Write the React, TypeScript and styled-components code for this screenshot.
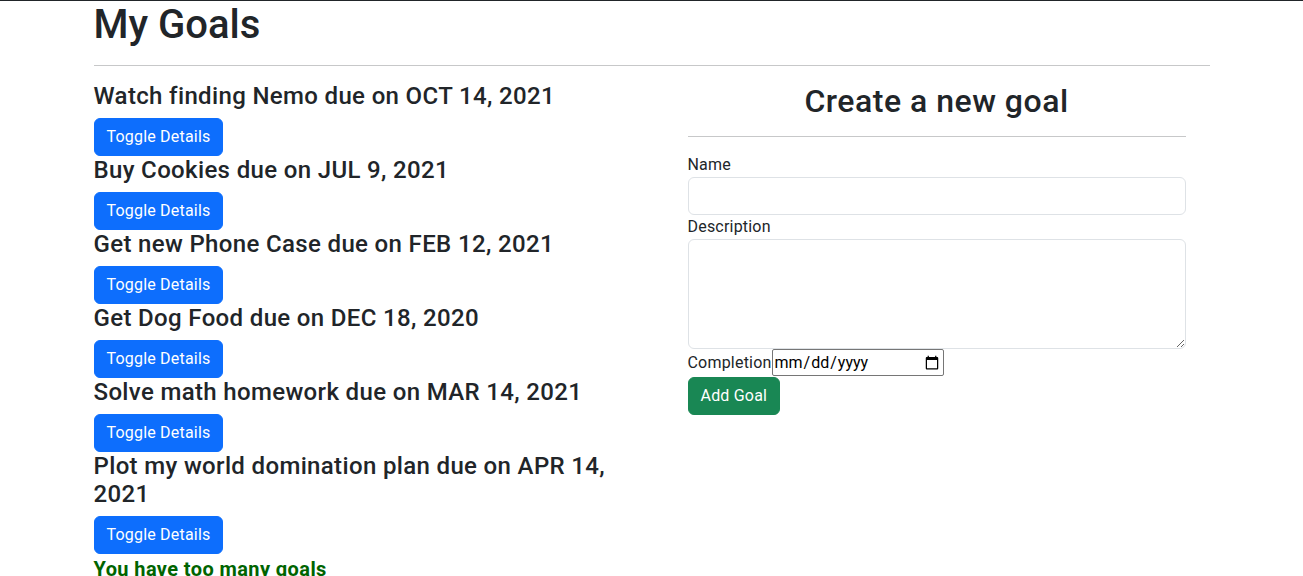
import styled, { createGlobalStyle } from "styled-components";

const Global = createGlobalStyle`
    *, *::before, *::after {
        box-sizing: border-box;
    }
    body {
        margin: 0;
        font-family: Roboto, "Liberation Sans", Arial, sans-serif;
        font-size: 16px;
        line-height: 1.5;
        color: #212529;
        background: #fff;
        border-top: 1px solid #212529;
    }
    input, button, textarea {
        font-family: inherit;
        font-size: inherit;
        line-height: inherit;
    }
`

const Container = styled.div`
    width: 1140px;
    margin: 0 auto;
    padding: 0 12px;
`

const Title = styled.h1`
    margin: 0 0 8px;
    font-size: 40px;
    font-weight: 500;
    line-height: 48px;
`

const Rule = styled.hr`
    margin: 16px 0;
    border: 0;
    border-top: 1px solid #212529;
    opacity: 0.25;
`

const Row = styled.div`
    display: grid;
    grid-template-columns: 1fr 1fr;
    column-gap: 24px;
`

const GoalList = styled.div`
    display: flex;
    flex-direction: column;
    align-items: flex-start;
`

const GoalTitle = styled.h4`
    margin: 0 0 8px;
    font-size: 24px;
    font-weight: 500;
    line-height: 28px;
    letter-spacing: 0.35px;
`

const Button = styled.button<{ $variant?: "primary" | "success" }>`
    display: inline-block;
    padding: 6px 12px;
    border: 1px solid ${p => p.$variant === "success" ? "#198754" : "#0d6efd"};
    border-radius: 6px;
    background: ${p => p.$variant === "success" ? "#198754" : "#0d6efd"};
    color: #fff;
    font-weight: 400;
    letter-spacing: 0.2px;
    cursor: pointer;
`

const Warning = styled.p`
    margin: 0;
    font-size: 20px;
    font-weight: 700;
    line-height: 30px;
    letter-spacing: 0.4px;
    color: #006400;
`

const FormCol = styled.div`
    padding: 0 24px;
`

const FormTitle = styled.h2`
    margin: 0 0 8px;
    font-size: 32px;
    font-weight: 500;
    line-height: 38px;
    letter-spacing: 0.5px;
    text-align: center;
`

const Label = styled.label`
    display: inline-block;
    letter-spacing: 0.2px;
`

const Field = styled.input`
    display: block;
    width: 100%;
    height: 38px;
    padding: 6px 12px;
    border: 1px solid #dee2e6;
    border-radius: 6px;
    color: #212529;
    background: #fff;
    outline: none;
`

const Area = styled.textarea`
    display: block;
    width: 100%;
    height: 110px;
    padding: 6px 12px;
    border: 1px solid #dee2e6;
    border-radius: 6px;
    resize: vertical;
    outline: none;
`

const DateLine = styled.div`
    height: 28px;
`

const DateInput = styled.input`
    margin: 0;
    padding: 0 1px;
    border: 1px solid #767676;
    border-radius: 2px;
    width: 172px;
    height: 27px;
`

const goals = [
    "Watch finding Nemo due on OCT 14, 2021",
    "Buy Cookies due on JUL 9, 2021",
    "Get new Phone Case due on FEB 12, 2021",
    "Get Dog Food due on DEC 18, 2020",
    "Solve math homework due on MAR 14, 2021",
    "Plot my world domination plan due on APR 14, 2021",
]

export default function App() {
    return (
        <>
            <Global />
            <Container>
                <Title>My Goals</Title>
                <Rule />
                <Row>
                    <GoalList>
                        {goals.map(g => (
                            <div key={g}>
                                <GoalTitle>{g}</GoalTitle>
                                <Button>Toggle Details</Button>
                            </div>
                        ))}
                        <Warning>You have too many goals</Warning>
                    </GoalList>
                    <FormCol>
                        <FormTitle>Create a new goal</FormTitle>
                        <Rule />
                        <form onSubmit={e => e.preventDefault()}>
                            <Label htmlFor="name">Name</Label>
                            <Field id="name" type="text" />
                            <Label htmlFor="desc">Description</Label>
                            <Area id="desc" rows={4} />
                            <DateLine>
                                <Label htmlFor="date">Completion</Label>
                                <DateInput id="date" type="date" />
                            </DateLine>
                            <Button $variant="success" type="submit">Add Goal</Button>
                        </form>
                    </FormCol>
                </Row>
            </Container>
        </>
    )
}
